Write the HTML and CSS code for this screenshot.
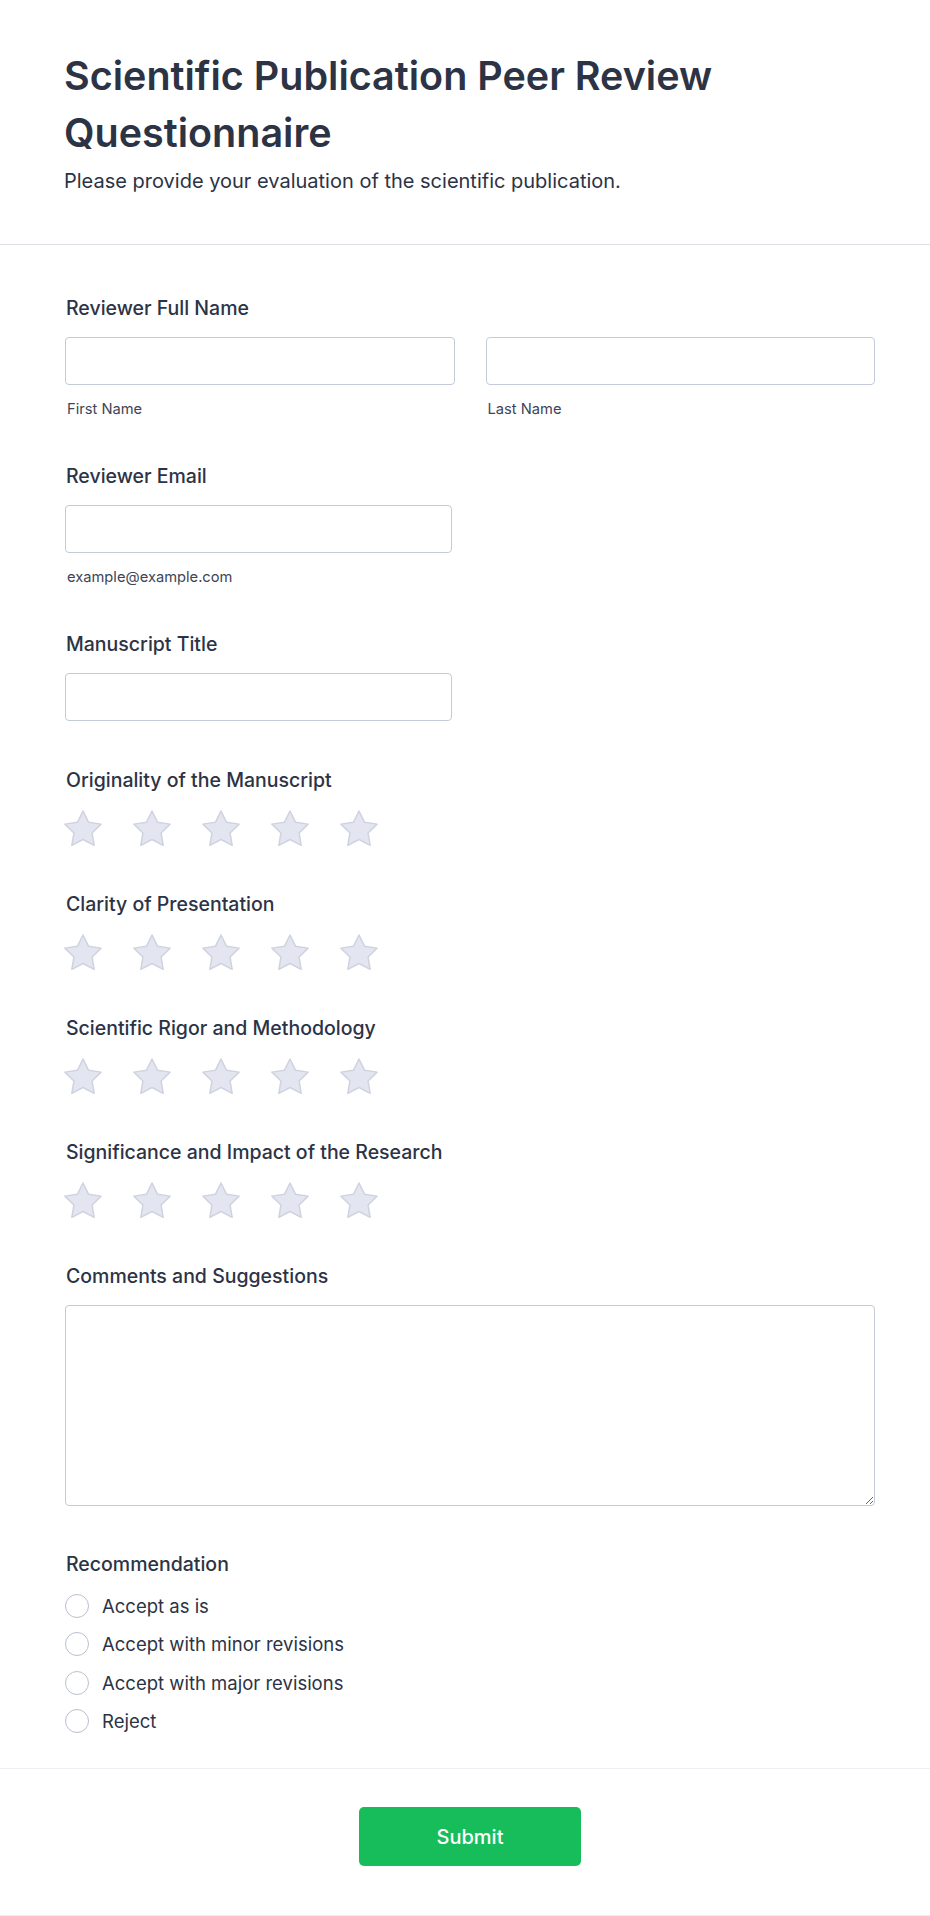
FILE: index.html
```html
<!DOCTYPE html>
<html lang="en">
<head>
<meta charset="utf-8">
<title>Scientific Publication Peer Review Questionnaire</title>
<link rel="stylesheet" href="styles.css">
</head>
<body>
<div class="page">
  <header class="header">
    <h1 class="title">Scientific Publication Peer Review Questionnaire</h1>
    <p class="subtitle">Please provide your evaluation of the scientific publication.</p>
  </header>

  <form class="form">
    <div class="field">
      <label class="label">Reviewer Full Name</label>
      <div class="name-row">
        <div class="sub-col">
          <input class="input" type="text">
          <span class="sublabel">First Name</span>
        </div>
        <div class="sub-col">
          <input class="input" type="text">
          <span class="sublabel">Last Name</span>
        </div>
      </div>
    </div>

    <div class="field">
      <label class="label">Reviewer Email</label>
      <div class="sub-col half">
        <input class="input" type="email">
        <span class="sublabel">example@example.com</span>
      </div>
    </div>

    <div class="field field-gap">
      <label class="label">Manuscript Title</label>
      <input class="input half" type="text">
    </div>

    <div class="field">
      <label class="label">Originality of the Manuscript</label>
      <div class="stars">
        <svg class="star" viewBox="0 0 40 38"><path d="M20 1 L25.58 12.31 L38.07 14.13 L29.04 22.94 L31.17 35.37 L20 29.5 L8.83 35.37 L10.96 22.94 L1.93 14.13 L14.42 12.31 Z"/></svg>
        <svg class="star" viewBox="0 0 40 38"><path d="M20 1 L25.58 12.31 L38.07 14.13 L29.04 22.94 L31.17 35.37 L20 29.5 L8.83 35.37 L10.96 22.94 L1.93 14.13 L14.42 12.31 Z"/></svg>
        <svg class="star" viewBox="0 0 40 38"><path d="M20 1 L25.58 12.31 L38.07 14.13 L29.04 22.94 L31.17 35.37 L20 29.5 L8.83 35.37 L10.96 22.94 L1.93 14.13 L14.42 12.31 Z"/></svg>
        <svg class="star" viewBox="0 0 40 38"><path d="M20 1 L25.58 12.31 L38.07 14.13 L29.04 22.94 L31.17 35.37 L20 29.5 L8.83 35.37 L10.96 22.94 L1.93 14.13 L14.42 12.31 Z"/></svg>
        <svg class="star" viewBox="0 0 40 38"><path d="M20 1 L25.58 12.31 L38.07 14.13 L29.04 22.94 L31.17 35.37 L20 29.5 L8.83 35.37 L10.96 22.94 L1.93 14.13 L14.42 12.31 Z"/></svg>
      </div>
    </div>

    <div class="field">
      <label class="label">Clarity of Presentation</label>
      <div class="stars">
        <svg class="star" viewBox="0 0 40 38"><path d="M20 1 L25.58 12.31 L38.07 14.13 L29.04 22.94 L31.17 35.37 L20 29.5 L8.83 35.37 L10.96 22.94 L1.93 14.13 L14.42 12.31 Z"/></svg>
        <svg class="star" viewBox="0 0 40 38"><path d="M20 1 L25.58 12.31 L38.07 14.13 L29.04 22.94 L31.17 35.37 L20 29.5 L8.83 35.37 L10.96 22.94 L1.93 14.13 L14.42 12.31 Z"/></svg>
        <svg class="star" viewBox="0 0 40 38"><path d="M20 1 L25.58 12.31 L38.07 14.13 L29.04 22.94 L31.17 35.37 L20 29.5 L8.83 35.37 L10.96 22.94 L1.93 14.13 L14.42 12.31 Z"/></svg>
        <svg class="star" viewBox="0 0 40 38"><path d="M20 1 L25.58 12.31 L38.07 14.13 L29.04 22.94 L31.17 35.37 L20 29.5 L8.83 35.37 L10.96 22.94 L1.93 14.13 L14.42 12.31 Z"/></svg>
        <svg class="star" viewBox="0 0 40 38"><path d="M20 1 L25.58 12.31 L38.07 14.13 L29.04 22.94 L31.17 35.37 L20 29.5 L8.83 35.37 L10.96 22.94 L1.93 14.13 L14.42 12.31 Z"/></svg>
      </div>
    </div>

    <div class="field">
      <label class="label">Scientific Rigor and Methodology</label>
      <div class="stars">
        <svg class="star" viewBox="0 0 40 38"><path d="M20 1 L25.58 12.31 L38.07 14.13 L29.04 22.94 L31.17 35.37 L20 29.5 L8.83 35.37 L10.96 22.94 L1.93 14.13 L14.42 12.31 Z"/></svg>
        <svg class="star" viewBox="0 0 40 38"><path d="M20 1 L25.58 12.31 L38.07 14.13 L29.04 22.94 L31.17 35.37 L20 29.5 L8.83 35.37 L10.96 22.94 L1.93 14.13 L14.42 12.31 Z"/></svg>
        <svg class="star" viewBox="0 0 40 38"><path d="M20 1 L25.58 12.31 L38.07 14.13 L29.04 22.94 L31.17 35.37 L20 29.5 L8.83 35.37 L10.96 22.94 L1.93 14.13 L14.42 12.31 Z"/></svg>
        <svg class="star" viewBox="0 0 40 38"><path d="M20 1 L25.58 12.31 L38.07 14.13 L29.04 22.94 L31.17 35.37 L20 29.5 L8.83 35.37 L10.96 22.94 L1.93 14.13 L14.42 12.31 Z"/></svg>
        <svg class="star" viewBox="0 0 40 38"><path d="M20 1 L25.58 12.31 L38.07 14.13 L29.04 22.94 L31.17 35.37 L20 29.5 L8.83 35.37 L10.96 22.94 L1.93 14.13 L14.42 12.31 Z"/></svg>
      </div>
    </div>

    <div class="field">
      <label class="label">Significance and Impact of the Research</label>
      <div class="stars">
        <svg class="star" viewBox="0 0 40 38"><path d="M20 1 L25.58 12.31 L38.07 14.13 L29.04 22.94 L31.17 35.37 L20 29.5 L8.83 35.37 L10.96 22.94 L1.93 14.13 L14.42 12.31 Z"/></svg>
        <svg class="star" viewBox="0 0 40 38"><path d="M20 1 L25.58 12.31 L38.07 14.13 L29.04 22.94 L31.17 35.37 L20 29.5 L8.83 35.37 L10.96 22.94 L1.93 14.13 L14.42 12.31 Z"/></svg>
        <svg class="star" viewBox="0 0 40 38"><path d="M20 1 L25.58 12.31 L38.07 14.13 L29.04 22.94 L31.17 35.37 L20 29.5 L8.83 35.37 L10.96 22.94 L1.93 14.13 L14.42 12.31 Z"/></svg>
        <svg class="star" viewBox="0 0 40 38"><path d="M20 1 L25.58 12.31 L38.07 14.13 L29.04 22.94 L31.17 35.37 L20 29.5 L8.83 35.37 L10.96 22.94 L1.93 14.13 L14.42 12.31 Z"/></svg>
        <svg class="star" viewBox="0 0 40 38"><path d="M20 1 L25.58 12.31 L38.07 14.13 L29.04 22.94 L31.17 35.37 L20 29.5 L8.83 35.37 L10.96 22.94 L1.93 14.13 L14.42 12.31 Z"/></svg>
      </div>
    </div>

    <div class="field">
      <label class="label">Comments and Suggestions</label>
      <textarea class="textarea"></textarea>
    </div>

    <div class="field">
      <label class="label">Recommendation</label>
      <div class="radios">
        <label class="radio-row"><span class="radio"></span><span class="radio-text">Accept as is</span></label>
        <label class="radio-row"><span class="radio"></span><span class="radio-text">Accept with minor revisions</span></label>
        <label class="radio-row"><span class="radio"></span><span class="radio-text">Accept with major revisions</span></label>
        <label class="radio-row"><span class="radio"></span><span class="radio-text">Reject</span></label>
      </div>
    </div>
  </form>

  <footer class="footer">
    <button class="submit" type="button">Submit</button>
  </footer>
</div>
</body>
</html>
```

FILE: styles.css
```css
* {
  box-sizing: border-box;
}

html, body {
  margin: 0;
  padding: 0;
  background: #ffffff;
}

body {
  font-family: Inter, "Noto Sans", "Liberation Sans", sans-serif;
  color: #2c3345;
}

.page {
  width: 930px;
  border-bottom: 1px solid #eceef3;
}

.header {
  padding: 48px 55px 49px 64px;
  border-bottom: 1px solid #dfe1e8;
}

.title {
  margin: 0;
  font-size: 39.5px;
  line-height: 57px;
  font-weight: 600;
  color: #2c3345;
}

.subtitle {
  margin: 5px 0 0;
  font-size: 20px;
  line-height: 28px;
  font-weight: 400;
  color: #2c3345;
}

.form {
  padding: 51px 55px 28px 65px;
  display: flex;
  flex-direction: column;
  gap: 46px;
}

.field {
  display: flex;
  flex-direction: column;
  align-items: flex-start;
}

.field-gap {
  margin-bottom: 1px;
}

.label {
  display: block;
  font-size: 19.5px;
  line-height: 24px;
  font-weight: 500;
  color: #2c3345;
  margin: 0 0 17px 1px;
}

.name-row {
  display: grid;
  grid-template-columns: 1fr 1fr;
  column-gap: 31px;
  width: 100%;
}

.sub-col {
  display: flex;
  flex-direction: column;
}

.half {
  width: 387px;
}

.input {
  display: block;
  width: 100%;
  height: 48px;
  border: 1px solid #c3cad8;
  border-radius: 4px;
  background: #fff;
  font-family: inherit;
  font-size: 16px;
  padding: 0 12px;
  margin: 0;
}

input.half {
  width: 387px;
}

.sublabel {
  display: block;
  margin: 15px 0 0 2px;
  font-size: 14.7px;
  line-height: 18px;
  color: #3d4556;
}

.stars {
  display: flex;
  gap: 29px;
  margin-left: -2px;
  height: 37px;
}

.star {
  width: 40px;
  height: 38px;
  display: block;
  margin-top: 1px;
  flex: 0 0 auto;
}

.star path {
  fill: #e3e6f0;
  stroke: #cfd3e0;
  stroke-width: 1.5;
  stroke-linejoin: round;
}

.textarea {
  display: block;
  width: 100%;
  height: 201px;
  border: 1px solid #c3cad8;
  border-radius: 4px;
  background: #fff;
  font-family: inherit;
  font-size: 16px;
  padding: 10px 12px;
  margin: 0;
  resize: vertical;
}

.radios {
  display: flex;
  flex-direction: column;
  margin-top: -6px;
}

.radio-row {
  display: flex;
  align-items: center;
  height: 38.3px;
  gap: 13px;
}

.radio {
  width: 24px;
  height: 24px;
  border-radius: 50%;
  border: 1.5px solid #b9bfcd;
  background: #fff;
  flex: 0 0 auto;
}

.radio-text {
  font-size: 18.5px;
  line-height: 24px;
  color: #2c3345;
}

.footer {
  border-top: 1px solid #eceef3;
  padding: 38px 55px 49px 65px;
  display: flex;
  justify-content: center;
}

.submit {
  width: 222px;
  height: 59px;
  border: none;
  border-radius: 5px;
  background: #18bd5b;
  color: #fff;
  font-family: inherit;
  font-size: 20px;
  font-weight: 500;
  cursor: pointer;
}
```
